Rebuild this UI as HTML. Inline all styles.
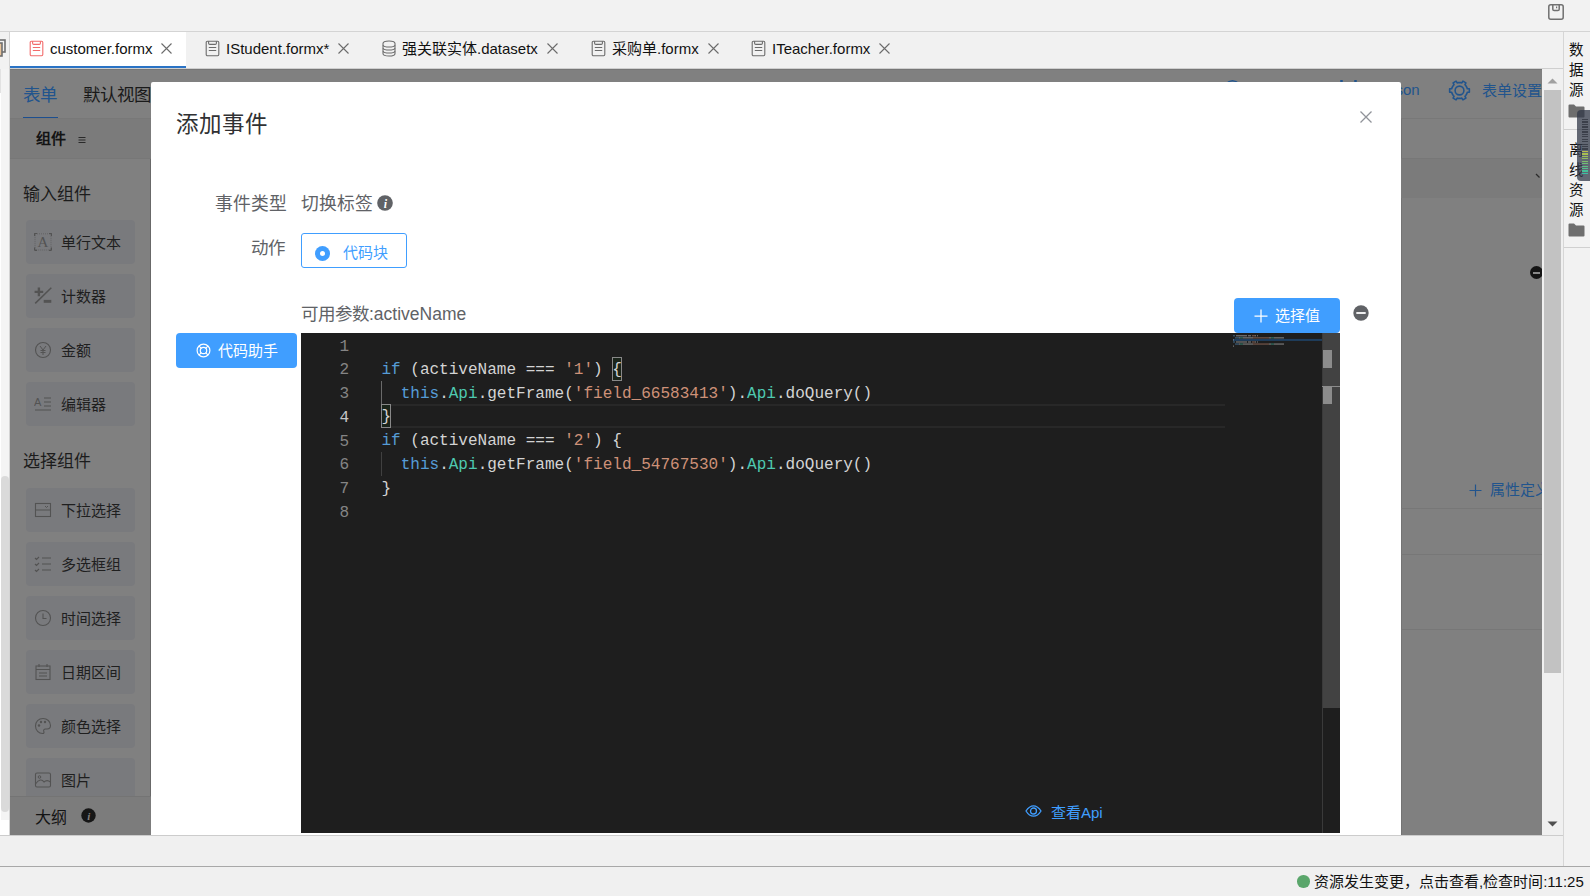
<!DOCTYPE html>
<html lang="zh-CN"><head><meta charset="utf-8">
<style>
*{margin:0;padding:0;box-sizing:border-box}
html,body{width:1590px;height:896px;overflow:hidden;background:#f0f0f0;font-family:"Liberation Sans",sans-serif;position:relative;color:#000}
.a{position:absolute}
.t{white-space:nowrap;line-height:1}
.ln{left:301px;width:48px;padding-top:2.5px;text-align:right;font-family:"Liberation Mono",monospace;font-size:16.04px;line-height:23.75px;white-space:pre}
.code{left:381.4px;padding-top:2px;font-family:"Liberation Mono",monospace;font-size:16.04px;line-height:23.75px;white-space:pre}
.tab{top:41px;font-size:15px;color:#111}
</style></head><body>

<!-- top bar -->
<div class="a" style="left:0;top:0;width:1590px;height:31px;background:#f2f2f2"></div>
<div class="a" style="left:0;top:31px;width:1590px;height:1px;background:#d4d4d4"></div>

<!-- tab bar -->
<div class="a" style="left:0;top:32px;width:1563px;height:36px;background:#f1f1f1"></div>
<div class="a" style="left:10px;top:32px;width:176px;height:34px;background:#fff"></div>
<div class="a" style="left:10px;top:66px;width:176px;height:2px;background:#2a73c5"></div>
<div class="a" style="left:0;top:68px;width:1563px;height:1px;background:#cfcfcf"></div>

<svg class="a" style="left:29px;top:40px" width="15" height="17" viewBox="0 0 15 17"><rect x="1.2" y="1.2" width="12.6" height="14.6" rx="1.2" stroke="#f26b6b" stroke-width="1.1" fill="none"/><path d="M3.6 1.2V3.2Q3.6 4.4 4.8 4.4H10.2Q11.4 4.4 11.4 3.2V1.2" stroke="#f26b6b" stroke-width="1.1" fill="none"/><path d="M3.8 7.5H11.2M3.8 10.5H11.2" stroke="#f26b6b" stroke-width="1.1" fill="none"/></svg>
<div class="a t tab" style="left:50px">customer.formx</div>
<svg class="a" style="left:161px;top:43px" width="11" height="11" viewBox="0 0 11 11"><path d="M0.5 0.5L10.5 10.5M10.5 0.5L0.5 10.5" stroke="#6b6b6b" stroke-width="1.1" fill="none"/></svg>
<svg class="a" style="left:205px;top:40px" width="15" height="17" viewBox="0 0 15 17"><rect x="1.2" y="1.2" width="12.6" height="14.6" rx="1.2" stroke="#6b6b6b" stroke-width="1.1" fill="none"/><path d="M3.6 1.2V3.2Q3.6 4.4 4.8 4.4H10.2Q11.4 4.4 11.4 3.2V1.2" stroke="#6b6b6b" stroke-width="1.1" fill="none"/><path d="M3.8 7.5H11.2M3.8 10.5H11.2" stroke="#6b6b6b" stroke-width="1.1" fill="none"/></svg>
<div class="a t tab" style="left:226px">IStudent.formx*</div>
<svg class="a" style="left:338px;top:43px" width="11" height="11" viewBox="0 0 11 11"><path d="M0.5 0.5L10.5 10.5M10.5 0.5L0.5 10.5" stroke="#6b6b6b" stroke-width="1.1" fill="none"/></svg>
<svg class="a" style="left:382px;top:40px" width="14" height="17" viewBox="0 0 14 17"><path d="M1 3.6Q1 1 7 1Q13 1 13 3.6V13.4Q13 16 7 16Q1 16 1 13.4Z" stroke="#6b6b6b" stroke-width="1.1" fill="none"/><path d="M1 5.2Q2 7 7 7Q12 7 13 5.2M1 8.2Q2 10 7 10Q12 10 13 8.2M1 11.2Q2 13 7 13Q12 13 13 11.2" stroke="#6b6b6b" stroke-width="1.1" fill="none"/></svg>
<div class="a t tab" style="left:402px">强关联实体.datasetx</div>
<svg class="a" style="left:547px;top:43px" width="11" height="11" viewBox="0 0 11 11"><path d="M0.5 0.5L10.5 10.5M10.5 0.5L0.5 10.5" stroke="#6b6b6b" stroke-width="1.1" fill="none"/></svg>
<svg class="a" style="left:591px;top:40px" width="15" height="17" viewBox="0 0 15 17"><rect x="1.2" y="1.2" width="12.6" height="14.6" rx="1.2" stroke="#6b6b6b" stroke-width="1.1" fill="none"/><path d="M3.6 1.2V3.2Q3.6 4.4 4.8 4.4H10.2Q11.4 4.4 11.4 3.2V1.2" stroke="#6b6b6b" stroke-width="1.1" fill="none"/><path d="M3.8 7.5H11.2M3.8 10.5H11.2" stroke="#6b6b6b" stroke-width="1.1" fill="none"/></svg>
<div class="a t tab" style="left:612px">采购单.formx</div>
<svg class="a" style="left:708px;top:43px" width="11" height="11" viewBox="0 0 11 11"><path d="M0.5 0.5L10.5 10.5M10.5 0.5L0.5 10.5" stroke="#6b6b6b" stroke-width="1.1" fill="none"/></svg>
<svg class="a" style="left:751px;top:40px" width="15" height="17" viewBox="0 0 15 17"><rect x="1.2" y="1.2" width="12.6" height="14.6" rx="1.2" stroke="#6b6b6b" stroke-width="1.1" fill="none"/><path d="M3.6 1.2V3.2Q3.6 4.4 4.8 4.4H10.2Q11.4 4.4 11.4 3.2V1.2" stroke="#6b6b6b" stroke-width="1.1" fill="none"/><path d="M3.8 7.5H11.2M3.8 10.5H11.2" stroke="#6b6b6b" stroke-width="1.1" fill="none"/></svg>
<div class="a t tab" style="left:772px">ITeacher.formx</div>
<svg class="a" style="left:879px;top:43px" width="11" height="11" viewBox="0 0 11 11"><path d="M0.5 0.5L10.5 10.5M10.5 0.5L0.5 10.5" stroke="#6b6b6b" stroke-width="1.1" fill="none"/></svg>
<svg class="a" style="left:1547px;top:3px" width="18" height="18" viewBox="0 0 18 18"><rect x="1.8" y="1.8" width="14.4" height="14.4" rx="2" stroke="#707070" stroke-width="1.5" fill="none"/><path d="M5.8 2V6.2Q5.8 7.6 7.2 7.6H10.8Q12.2 7.6 12.2 6.2V2" stroke="#707070" stroke-width="1.5" fill="none"/><path d="M9.6 3.4V5.2" stroke="#707070" stroke-width="1.2"/></svg>
<!-- left strip -->
<div class="a" style="left:0;top:32px;width:9px;height:803px;background:#f2f2f2"></div>
<div class="a" style="left:9px;top:32px;width:1px;height:803px;background:#d4d4d4"></div>

<svg class="a" style="left:-8px;top:39px" width="14" height="18" viewBox="0 0 14 18"><rect x="4" y="1" width="9" height="12" stroke="#6f6f6f" stroke-width="1.6" fill="none"/><rect x="1" y="4" width="9" height="13" stroke="#6f6f6f" stroke-width="1.6" fill="#e8c49a"/></svg>
<!-- designer under overlay -->
<div id="designer" class="a" style="left:10px;top:69px;width:1532px;height:766px;background:#808080;overflow:hidden">
<div class="a" style="left:0;top:0;width:1532px;height:1px;background:#767676"></div>
<div class="a" style="left:140px;top:49px;width:1px;height:717px;background:#686868"></div>
<div class="a" style="left:1391px;top:49px;width:1px;height:717px;background:#747474"></div>

<div class="a t" style="left:12.5px;top:18px;font-size:17.5px;color:#21548d">表单</div>
<div class="a t" style="left:73px;top:18px;font-size:17.5px;color:#1a1a1a">默认视图</div>
<div class="a" style="left:0;top:49px;width:141px;height:1px;background:#767676"></div>
<div class="a" style="left:12.5px;top:48px;width:35px;height:2px;background:#1d4f8f"></div>
<div class="a" style="left:0;top:50px;width:141px;height:39px;background:#7b7b7b"></div>
<div class="a t" style="left:25.5px;top:62px;font-size:15px;font-weight:bold;color:#141414">组件</div>
<svg class="a" style="left:68px;top:67px" width="8" height="8" viewBox="0 0 8 8"><path d="M0.5 1.5H7.5M0.5 4H7.5M0.5 6.5H7.5" stroke="#2a2a2a" stroke-width="1.1"/></svg>
<div class="a t" style="left:12.5px;top:116.5px;font-size:17px;color:#1c1c1c">输入组件</div>
<div class="a" style="left:16px;top:151px;width:109px;height:43.5px;border-radius:4px;background:#797a7d"></div>
<svg class="a" style="left:23.5px;top:164px" width="18" height="18" viewBox="0 0 18 18"><rect x="1" y="0.8" width="16" height="16.2" stroke="#535353" stroke-width="0.8" stroke-dasharray="1 1" fill="none" opacity=".7"/><path d="M0.5 0.3H3M0.5 0.3V3M17.5 0.3H15M17.5 0.3V3M0.5 17.3H3M0.5 17.3V14.5M17.5 17.3H15M17.5 17.3V14.5" stroke="#535353" stroke-width="1.3" fill="none"/><text x="9" y="13.8" font-family="Liberation Serif" font-size="15" fill="#535353" text-anchor="middle">A</text></svg>
<div class="a t" style="left:51px;top:166px;font-size:15px;color:#1f1f1f">单行文本</div>
<div class="a" style="left:16px;top:205px;width:109px;height:43.5px;border-radius:4px;background:#797a7d"></div>
<svg class="a" style="left:23.5px;top:218px" width="18" height="18" viewBox="0 0 18 18"><path d="M0.6 4.9H9.2M4.9 0.6V9.2" stroke="#535353" stroke-width="2.4" fill="none"/><path d="M1.2 16.4L17.3 0.8" stroke="#535353" stroke-width="1.5" fill="none"/><rect x="9.7" y="12.9" width="7.6" height="2.9" fill="#535353"/></svg>
<div class="a t" style="left:51px;top:220px;font-size:15px;color:#1f1f1f">计数器</div>
<div class="a" style="left:16px;top:259px;width:109px;height:43.5px;border-radius:4px;background:#797a7d"></div>
<svg class="a" style="left:23.5px;top:272px" width="18" height="18" viewBox="0 0 18 18"><circle cx="9" cy="9" r="7.5" stroke="#535353" stroke-width="1.1" fill="none"/><path d="M6 5L9 9L12 5M9 9V14M6.5 9.5H11.5M6.5 11.5H11.5" stroke="#535353" stroke-width="1" fill="none"/></svg>
<div class="a t" style="left:51px;top:274px;font-size:15px;color:#1f1f1f">金额</div>
<div class="a" style="left:16px;top:313px;width:109px;height:43.5px;border-radius:4px;background:#797a7d"></div>
<svg class="a" style="left:23.5px;top:326px" width="18" height="18" viewBox="0 0 18 18"><text x="0" y="11" font-family="Liberation Sans" font-size="11" fill="#535353">A</text><path d="M10 3H17M10 7H17M10 11H17M1 15H17" stroke="#535353" stroke-width="1.1" fill="none"/></svg>
<div class="a t" style="left:51px;top:328px;font-size:15px;color:#1f1f1f">编辑器</div>
<div class="a t" style="left:12.5px;top:383.5px;font-size:17px;color:#1c1c1c">选择组件</div>
<div class="a" style="left:16px;top:419px;width:109px;height:43.5px;border-radius:4px;background:#797a7d"></div>
<svg class="a" style="left:23.5px;top:432px" width="18" height="18" viewBox="0 0 18 18"><rect x="1.5" y="2.5" width="15" height="13" stroke="#535353" stroke-width="1.1" fill="none"/><path d="M1.5 9H16.5M11 5L12.5 6.5L14 5" stroke="#535353" stroke-width="1" fill="none"/></svg>
<div class="a t" style="left:51px;top:434px;font-size:15px;color:#1f1f1f">下拉选择</div>
<div class="a" style="left:16px;top:473px;width:109px;height:43.5px;border-radius:4px;background:#797a7d"></div>
<svg class="a" style="left:23.5px;top:486px" width="18" height="18" viewBox="0 0 18 18"><path d="M1 3L2.5 4.5L5 2M1 9L2.5 10.5L5 8M1 15L2.5 16.5L5 14M8 3H17M8 9H17M8 15H17" stroke="#535353" stroke-width="1.1" fill="none"/></svg>
<div class="a t" style="left:51px;top:488px;font-size:15px;color:#1f1f1f">多选框组</div>
<div class="a" style="left:16px;top:527px;width:109px;height:43.5px;border-radius:4px;background:#797a7d"></div>
<svg class="a" style="left:23.5px;top:540px" width="18" height="18" viewBox="0 0 18 18"><circle cx="9" cy="9" r="7.5" stroke="#535353" stroke-width="1.1" fill="none"/><path d="M9 4.5V9.5H12.5" stroke="#535353" stroke-width="1.1" fill="none"/></svg>
<div class="a t" style="left:51px;top:542px;font-size:15px;color:#1f1f1f">时间选择</div>
<div class="a" style="left:16px;top:581px;width:109px;height:43.5px;border-radius:4px;background:#797a7d"></div>
<svg class="a" style="left:23.5px;top:594px" width="18" height="18" viewBox="0 0 18 18"><rect x="2" y="3" width="14" height="13.5" stroke="#535353" stroke-width="1.1" fill="none"/><path d="M5 1V4M13 1V4M2 6.5H16M5 10H13M5 13H13" stroke="#535353" stroke-width="1.1" fill="none"/></svg>
<div class="a t" style="left:51px;top:596px;font-size:15px;color:#1f1f1f">日期区间</div>
<div class="a" style="left:16px;top:635px;width:109px;height:43.5px;border-radius:4px;background:#797a7d"></div>
<svg class="a" style="left:23.5px;top:648px" width="18" height="18" viewBox="0 0 18 18"><path d="M9 1.5C4.5 1.5 1.5 4.8 1.5 9C1.5 13.2 4.8 16.5 8.5 16.5C10 16.5 10.3 15.5 9.8 14.5C9.2 13.3 10 12 11.5 12H13C15 12 16.5 10.5 16.5 8.5C16.5 4.5 13.2 1.5 9 1.5Z" stroke="#535353" stroke-width="1.1" fill="none"/><circle cx="5" cy="8.5" r="1.2" fill="#535353"/><circle cx="7" cy="5" r="1.2" fill="#535353"/><circle cx="11" cy="5" r="1.2" fill="#535353"/></svg>
<div class="a t" style="left:51px;top:650px;font-size:15px;color:#1f1f1f">颜色选择</div>
<div class="a" style="left:16px;top:689px;width:109px;height:43.5px;border-radius:4px;background:#797a7d"></div>
<svg class="a" style="left:23.5px;top:702px" width="18" height="18" viewBox="0 0 18 18"><rect x="1.5" y="2" width="15" height="14" rx="1.5" stroke="#535353" stroke-width="1.1" fill="none"/><path d="M1.5 13C5 8 8 8 10 11C12 9 14 9 16.5 11" stroke="#535353" stroke-width="1.1" fill="none"/><circle cx="5.5" cy="6" r="1.3" stroke="#535353" stroke-width="1" fill="none"/></svg>
<div class="a t" style="left:51px;top:704px;font-size:15px;color:#1f1f1f">图片</div>
<div class="a" style="left:0;top:727px;width:141px;height:1px;background:#747474"></div>
<div class="a" style="left:0;top:728px;width:141px;height:38px;background:#7c7c7c"></div>
<div class="a t" style="left:25px;top:741px;font-size:16px;font-weight:500;color:#141414">大纲</div>
<svg class="a" style="left:71px;top:739px" width="15" height="15" viewBox="0 0 15 15"><circle cx="7.5" cy="7.5" r="7.2" fill="#161616"/><text x="7.8" y="11.8" font-family="Liberation Serif" font-style="italic" font-weight="bold" font-size="11" fill="#808080" text-anchor="middle">i</text></svg>
<div class="a t" style="left:1378px;top:13px;font-size:15px;color:#21548d">Json</div>
<svg class="a" style="left:1437.5px;top:10px" width="23" height="23" viewBox="0 0 23 23"><path d="M18.92 14.50 L19.29 13.30 L21.35 13.24 L21.35 9.76 L19.29 9.70 L18.92 8.50 L17.80 6.57 L16.96 5.65 L17.93 3.84 L14.92 2.10 L13.84 3.85 L12.61 3.58 L10.39 3.58 L9.16 3.85 L8.08 2.10 L5.07 3.84 L6.04 5.65 L5.20 6.57 L4.08 8.50 L3.71 9.70 L1.65 9.76 L1.65 13.24 L3.71 13.30 L4.08 14.50 L5.20 16.43 L6.04 17.35 L5.07 19.16 L8.08 20.90 L9.16 19.15 L10.39 19.42 L12.61 19.42 L13.84 19.15 L14.92 20.90 L17.93 19.16 L16.96 17.35 L17.80 16.43Z" stroke="#21548d" stroke-width="1.6" fill="none" stroke-linejoin="round"/><circle cx="11.5" cy="11.5" r="4.4" stroke="#21548d" stroke-width="1.6" fill="none"/></svg>
<div class="a t" style="left:1472px;top:13.5px;font-size:15px;color:#21548d">表单设置</div>
<svg class="a" style="left:1214px;top:10px" width="17" height="5" viewBox="0 0 17 5"><path d="M1.5 5Q8.5 -1.5 15.5 5" stroke="#21548d" stroke-width="1.6" fill="none"/></svg>
<div class="a" style="left:0;top:49px;width:1532px;height:1px;background:#787878"></div>
<div class="a" style="left:1330px;top:11px;width:3px;height:2px;border-radius:1px;background:#21548d"></div>
<div class="a" style="left:1344px;top:11px;width:3px;height:2px;border-radius:1px;background:#21548d"></div>
<div class="a" style="left:0;top:89px;width:1532px;height:1px;background:#777"></div>
<div class="a" style="left:1391px;top:90px;width:141px;height:39px;background:#7b7b7b"></div>
<svg class="a" style="left:1525px;top:103px" width="8" height="8" viewBox="0 0 8 8"><path d="M1 2L4.5 5.5" stroke="#2a2a2a" stroke-width="1.2"/></svg>
<div class="a" style="left:1519.5px;top:197px;width:13px;height:13px;border-radius:50%;background:#141414"></div>
<div class="a" style="left:1522.5px;top:202.5px;width:7px;height:2px;background:#888"></div>
<svg class="a" style="left:1459px;top:415px" width="13" height="13" viewBox="0 0 13 13"><path d="M6.5 0.5V12.5M0.5 6.5H12.5" stroke="#21548d" stroke-width="1.2"/></svg>
<div class="a t" style="left:1480px;top:413px;font-size:15px;color:#21548d">属性定义</div>
<div class="a" style="left:1391px;top:439px;width:141px;height:1px;background:#777"></div>
<div class="a" style="left:1391px;top:485px;width:141px;height:1px;background:#777"></div>
<div class="a" style="left:1391px;top:560px;width:141px;height:1px;background:#777"></div>
</div>

<!-- page scrollbar -->
<div class="a" style="left:1542px;top:69px;width:21px;height:766px;background:#f0f0f0"></div>

<!-- right panel -->
<div class="a" style="left:1563px;top:32px;width:1px;height:834px;background:#d6d6d6"></div>
<div class="a" style="left:1564px;top:32px;width:26px;height:834px;background:#f2f2f2"></div>

<svg class="a" style="left:1546px;top:77px" width="13" height="8" viewBox="0 0 13 8"><path d="M1.5 6.5L6.5 1.5L11.5 6.5Z" fill="#a0a0a0"/></svg>
<div class="a" style="left:1544px;top:90px;width:17px;height:583px;background:#c2c2c2"></div>
<svg class="a" style="left:1546px;top:819.5px" width="13" height="8" viewBox="0 0 13 8"><path d="M1.5 1.5L6.5 6.5L11.5 1.5Z" fill="#505050"/></svg>
<div class="a t" style="left:1568.5px;top:43px;font-size:14.5px;color:#111">数</div>
<div class="a t" style="left:1568.5px;top:63px;font-size:14.5px;color:#111">据</div>
<div class="a t" style="left:1568.5px;top:83px;font-size:14.5px;color:#111">源</div>
<svg class="a" style="left:1568px;top:104px" width="17" height="14" viewBox="0 0 17 14"><path d="M0.5 1.5Q0.5 0.5 1.5 0.5H6L8 2.5H15.5Q16.5 2.5 16.5 3.5V12.5Q16.5 13.5 15.5 13.5H1.5Q0.5 13.5 0.5 12.5Z" fill="#6e6e6e"/></svg>
<div class="a" style="left:1564px;top:129px;width:26px;height:1px;background:#d0d0d0"></div>
<div class="a t" style="left:1568.5px;top:143px;font-size:14.5px;color:#111">离</div>
<div class="a t" style="left:1568.5px;top:163px;font-size:14.5px;color:#111">线</div>
<div class="a t" style="left:1568.5px;top:183px;font-size:14.5px;color:#111">资</div>
<div class="a t" style="left:1568.5px;top:203px;font-size:14.5px;color:#111">源</div>
<svg class="a" style="left:1568px;top:223px" width="17" height="14" viewBox="0 0 17 14"><path d="M0.5 1.5Q0.5 0.5 1.5 0.5H6L8 2.5H15.5Q16.5 2.5 16.5 3.5V12.5Q16.5 13.5 15.5 13.5H1.5Q0.5 13.5 0.5 12.5Z" fill="#6e6e6e"/></svg>
<div class="a" style="left:1564px;top:247px;width:26px;height:1px;background:#d0d0d0"></div>
<div class="a" style="left:1577px;top:110px;width:16px;height:71px;border-radius:4px;background:rgba(50,56,72,0.75)"></div>
<div class="a" style="left:1582px;top:119.00px;width:5.5px;height:1.3px;background:#3b3f4a"></div>
<div class="a" style="left:1582px;top:121.45px;width:5.5px;height:1.3px;background:#3b3f4a"></div>
<div class="a" style="left:1582px;top:123.90px;width:5.5px;height:1.3px;background:#3b3f4a"></div>
<div class="a" style="left:1582px;top:126.35px;width:5.5px;height:1.3px;background:#3b3f4a"></div>
<div class="a" style="left:1582px;top:128.80px;width:5.5px;height:1.3px;background:#3b3f4a"></div>
<div class="a" style="left:1582px;top:131.25px;width:5.5px;height:1.3px;background:#3b3f4a"></div>
<div class="a" style="left:1582px;top:133.70px;width:5.5px;height:1.3px;background:#3b3f4a"></div>
<div class="a" style="left:1582px;top:136.15px;width:5.5px;height:1.3px;background:#3b3f4a"></div>
<div class="a" style="left:1582px;top:138.60px;width:5.5px;height:1.3px;background:#3b3f4a"></div>
<div class="a" style="left:1582px;top:141.05px;width:5.5px;height:1.3px;background:#3b3f4a"></div>
<div class="a" style="left:1582px;top:143.50px;width:5.5px;height:1.3px;background:#3b3f4a"></div>
<div class="a" style="left:1582px;top:145.95px;width:5.5px;height:1.3px;background:#3b3f4a"></div>
<div class="a" style="left:1582px;top:148.40px;width:5.5px;height:1.3px;background:#3b3f4a"></div>
<div class="a" style="left:1582px;top:150.85px;width:5.5px;height:1.3px;background:#b8bf4c"></div>
<div class="a" style="left:1582px;top:153.30px;width:5.5px;height:1.3px;background:#aabf52"></div>
<div class="a" style="left:1582px;top:155.75px;width:5.5px;height:1.3px;background:#9cbf58"></div>
<div class="a" style="left:1582px;top:158.20px;width:5.5px;height:1.3px;background:#8dbf60"></div>
<div class="a" style="left:1582px;top:160.65px;width:5.5px;height:1.3px;background:#7ebf6a"></div>
<div class="a" style="left:1582px;top:163.10px;width:5.5px;height:1.3px;background:#6fbf76"></div>
<div class="a" style="left:1582px;top:165.55px;width:5.5px;height:1.3px;background:#60bf82"></div>
<div class="a" style="left:1582px;top:168.00px;width:5.5px;height:1.3px;background:#52bf8e"></div>
<div class="a" style="left:1582px;top:170.45px;width:5.5px;height:1.3px;background:#46bf99"></div>
<div class="a" style="left:1582px;top:172.90px;width:5.5px;height:1.3px;background:#3cbfa3"></div>
<div class="a" style="left:0;top:69px;width:1px;height:24px;background:#e2e2e2"></div>
<div class="a" style="left:1px;top:69px;width:8px;height:766px;background:#f4f4f4"></div>
<div class="a" style="left:0;top:93px;width:1px;height:742px;background:#fff"></div>
<div class="a" style="left:1px;top:476px;width:8px;height:336px;border-radius:4px;background:#dadada"></div>
<div class="a" style="left:0;top:820px;width:9px;height:15px;background:#fff"></div>
<!-- bottom -->
<div class="a" style="left:0;top:835px;width:1563px;height:1px;background:#cccccc"></div>
<div class="a" style="left:0;top:866px;width:1590px;height:1px;background:#a8a8a8"></div>
<div class="a" style="left:0;top:867px;width:1590px;height:29px;background:#f0f0f0"></div>

<div class="a" style="left:1297px;top:875px;width:12.5px;height:12.5px;border-radius:50%;background:#5aa66b"></div>
<div class="a t" style="left:1314px;top:874px;font-size:15px;color:#111">资源发生变更，点击查看,检查时间:11:25</div>
<!-- modal -->
<div id="modal" class="a" style="left:151px;top:82px;width:1250px;height:753px;background:#fff;border-radius:2px 2px 0 0;overflow:hidden"></div>
<div class="a t" style="left:176px;top:113.5px;font-size:22.5px;color:#303133">添加事件</div>
<svg class="a" style="left:1359px;top:110px" width="14" height="14" viewBox="0 0 14 14"><path d="M1.5 1.5L12.5 12.5M12.5 1.5L1.5 12.5" stroke="#909399" stroke-width="1.3" fill="none"/></svg>

<div class="a t" style="left:215px;top:196px;font-size:17.8px;color:#606266">事件类型</div>
<div class="a t" style="left:301px;top:196px;font-size:17.8px;color:#606266">切换标签</div>
<svg class="a" style="left:377px;top:195px" width="16" height="16" viewBox="0 0 16 16"><circle cx="8" cy="8" r="7.8" fill="#606266"/><text x="8.3" y="12.6" font-family="Liberation Serif" font-style="italic" font-weight="bold" font-size="12" fill="#fff" text-anchor="middle">i</text></svg>

<div class="a t" style="left:251px;top:240px;font-size:17.5px;color:#606266">动作</div>
<div class="a" style="left:301px;top:233px;width:106px;height:35px;border:1px solid #409eff;border-radius:3px"></div>
<div class="a" style="left:315px;top:246px;width:15px;height:15px;border-radius:50%;background:#409eff"></div>
<div class="a" style="left:320px;top:251px;width:5px;height:5px;border-radius:50%;background:#fff"></div>
<div class="a t" style="left:342.5px;top:245px;font-size:15px;color:#409eff">代码块</div>

<div class="a t" style="left:301px;top:306px;font-size:17.5px;color:#606266">可用参数:activeName</div>

<div class="a" style="left:176px;top:333px;width:121px;height:35px;border-radius:4px;background:#409eff"></div>
<svg class="a" style="left:196.25px;top:342.8px" width="15" height="15" viewBox="0 0 15 15"><circle cx="7.5" cy="7.5" r="6.4" stroke="#fff" stroke-width="1.2" fill="none"/><circle cx="7.5" cy="7.5" r="3.2" stroke="#fff" stroke-width="1.2" fill="none"/><path d="M9.62 9.62L11.88 11.88M5.38 9.62L3.12 11.88M5.38 5.38L3.12 3.12M9.62 5.38L11.88 3.12" stroke="#fff" stroke-width="1.1"/></svg>
<div class="a t" style="left:218px;top:343px;font-size:15px;color:#fff">代码助手</div>

<div class="a" style="left:1234px;top:298px;width:106px;height:35px;border-radius:4px;background:#409eff"></div>
<svg class="a" style="left:1254px;top:308.5px" width="14" height="14" viewBox="0 0 14 14"><path d="M7 0.5V13.5M0.5 7H13.5" stroke="#fff" stroke-width="1.25" fill="none"/></svg>
<div class="a t" style="left:1275px;top:308px;font-size:15px;color:#fff">选择值</div>
<svg class="a" style="left:1353px;top:305px" width="16" height="16" viewBox="0 0 16 16"><circle cx="8" cy="8" r="7.7" fill="#606266"/><rect x="3.3" y="7.1" width="9.4" height="1.8" fill="#fff"/></svg>

<!-- editor -->
<div id="editor" class="a" style="left:301px;top:333px;width:1039px;height:500px;background:#1e1e1e;overflow:hidden"></div>
<div class="a" style="left:391px;top:404.45px;width:834px;height:23.75px;border-top:2px solid #282828;border-bottom:2px solid #282828"></div>
<div class="a" style="left:381px;top:380.70px;width:1px;height:23.75px;background:#6a6a6a"></div>
<div class="a" style="left:381px;top:451.95px;width:1px;height:23.75px;background:#404040"></div>
<div class="a" style="left:612.20px;top:356.95px;width:10px;height:23.75px;border:1px solid #888;background:rgba(0,100,0,0.1)"></div>
<div class="a" style="left:381.20px;top:404.45px;width:10px;height:23.75px;border:1px solid #888;background:rgba(0,100,0,0.1)"></div>
<div class="a ln" style="top:333.20px;color:#858585">1</div>
<div class="a ln" style="top:356.95px;color:#858585">2</div>
<div class="a code" style="top:356.95px"><span style="color:#569cd6">if</span><span style="color:#d4d4d4"> (activeName === </span><span style="color:#ce9178">'1'</span><span style="color:#d4d4d4">) {</span></div>
<div class="a ln" style="top:380.70px;color:#858585">3</div>
<div class="a code" style="top:380.70px"><span style="color:#d4d4d4">  </span><span style="color:#569cd6">this</span><span style="color:#d4d4d4">.</span><span style="color:#4ec9b0">Api</span><span style="color:#d4d4d4">.getFrame(</span><span style="color:#ce9178">'field_66583413'</span><span style="color:#d4d4d4">).</span><span style="color:#4ec9b0">Api</span><span style="color:#d4d4d4">.doQuery()</span></div>
<div class="a ln" style="top:404.45px;color:#c6c6c6">4</div>
<div class="a code" style="top:404.45px"><span style="color:#d4d4d4">}</span></div>
<div class="a ln" style="top:428.20px;color:#858585">5</div>
<div class="a code" style="top:428.20px"><span style="color:#569cd6">if</span><span style="color:#d4d4d4"> (activeName === </span><span style="color:#ce9178">'2'</span><span style="color:#d4d4d4">) {</span></div>
<div class="a ln" style="top:451.95px;color:#858585">6</div>
<div class="a code" style="top:451.95px"><span style="color:#d4d4d4">  </span><span style="color:#569cd6">this</span><span style="color:#d4d4d4">.</span><span style="color:#4ec9b0">Api</span><span style="color:#d4d4d4">.getFrame(</span><span style="color:#ce9178">'field_54767530'</span><span style="color:#d4d4d4">).</span><span style="color:#4ec9b0">Api</span><span style="color:#d4d4d4">.doQuery()</span></div>
<div class="a ln" style="top:475.70px;color:#858585">7</div>
<div class="a code" style="top:475.70px"><span style="color:#d4d4d4">}</span></div>
<div class="a ln" style="top:499.45px;color:#858585">8</div>
<svg class="a" style="left:1233px;top:333px" width="89" height="20" viewBox="0 0 89 20"><rect x="0" y="5.9" width="89" height="2.05" fill="#1f3e5e"/><rect x="0" y="2.09" width="2" height="1.3" fill="#569cd6" opacity=".45"/><rect x="3" y="2.09" width="11" height="1.3" fill="#d4d4d4" opacity=".45"/><rect x="15" y="2.09" width="3" height="1.3" fill="#d4d4d4" opacity=".45"/><rect x="19" y="2.09" width="3" height="1.3" fill="#ce9178" opacity=".45"/><rect x="22" y="2.09" width="1" height="1.3" fill="#d4d4d4" opacity=".45"/><rect x="24" y="2.09" width="1" height="1.3" fill="#d4d4d4" opacity=".45"/><rect x="2" y="4.17" width="4" height="1.3" fill="#569cd6" opacity=".45"/><rect x="6" y="4.17" width="1" height="1.3" fill="#d4d4d4" opacity=".45"/><rect x="7" y="4.17" width="3" height="1.3" fill="#4ec9b0" opacity=".45"/><rect x="10" y="4.17" width="10" height="1.3" fill="#d4d4d4" opacity=".45"/><rect x="20" y="4.17" width="16" height="1.3" fill="#ce9178" opacity=".45"/><rect x="36" y="4.17" width="2" height="1.3" fill="#d4d4d4" opacity=".45"/><rect x="38" y="4.17" width="3" height="1.3" fill="#4ec9b0" opacity=".45"/><rect x="41" y="4.17" width="10" height="1.3" fill="#d4d4d4" opacity=".45"/><rect x="0" y="6.25" width="1" height="1.3" fill="#d4d4d4" opacity=".45"/><rect x="0" y="8.33" width="2" height="1.3" fill="#569cd6" opacity=".45"/><rect x="3" y="8.33" width="11" height="1.3" fill="#d4d4d4" opacity=".45"/><rect x="15" y="8.33" width="3" height="1.3" fill="#d4d4d4" opacity=".45"/><rect x="19" y="8.33" width="3" height="1.3" fill="#ce9178" opacity=".45"/><rect x="22" y="8.33" width="1" height="1.3" fill="#d4d4d4" opacity=".45"/><rect x="24" y="8.33" width="1" height="1.3" fill="#d4d4d4" opacity=".45"/><rect x="2" y="10.41" width="4" height="1.3" fill="#569cd6" opacity=".45"/><rect x="6" y="10.41" width="1" height="1.3" fill="#d4d4d4" opacity=".45"/><rect x="7" y="10.41" width="3" height="1.3" fill="#4ec9b0" opacity=".45"/><rect x="10" y="10.41" width="10" height="1.3" fill="#d4d4d4" opacity=".45"/><rect x="20" y="10.41" width="16" height="1.3" fill="#ce9178" opacity=".45"/><rect x="36" y="10.41" width="2" height="1.3" fill="#d4d4d4" opacity=".45"/><rect x="38" y="10.41" width="3" height="1.3" fill="#4ec9b0" opacity=".45"/><rect x="41" y="10.41" width="10" height="1.3" fill="#d4d4d4" opacity=".45"/><rect x="0" y="12.49" width="1" height="1.3" fill="#d4d4d4" opacity=".45"/></svg>
<div class="a" style="left:1322px;top:333px;width:1px;height:500px;background:#3a3a3a"></div>
<div class="a" style="left:1323px;top:333px;width:17px;height:375px;background:#424242"></div>
<div class="a" style="left:1323px;top:350px;width:9px;height:18px;background:#8c8c8c"></div>
<div class="a" style="left:1322px;top:385.5px;width:18px;height:1.3px;background:#8c8c8c"></div>
<div class="a" style="left:1323px;top:386.5px;width:9px;height:17.5px;background:#8c8c8c"></div>
<svg class="a" style="left:1025px;top:804px" width="17" height="14" viewBox="0 0 17 14"><path d="M1 7C3.5 3 6 1.8 8.5 1.8S13.5 3 16 7C13.5 11 11 12.2 8.5 12.2S3.5 11 1 7Z" stroke="#409eff" stroke-width="1.3" fill="none"/><circle cx="8.5" cy="7" r="3" stroke="#409eff" stroke-width="1.3" fill="none"/></svg>
<div class="a t" style="left:1051px;top:805px;font-size:15px;color:#409eff">查看Api</div>
<!--/editor-->

</body></html>
